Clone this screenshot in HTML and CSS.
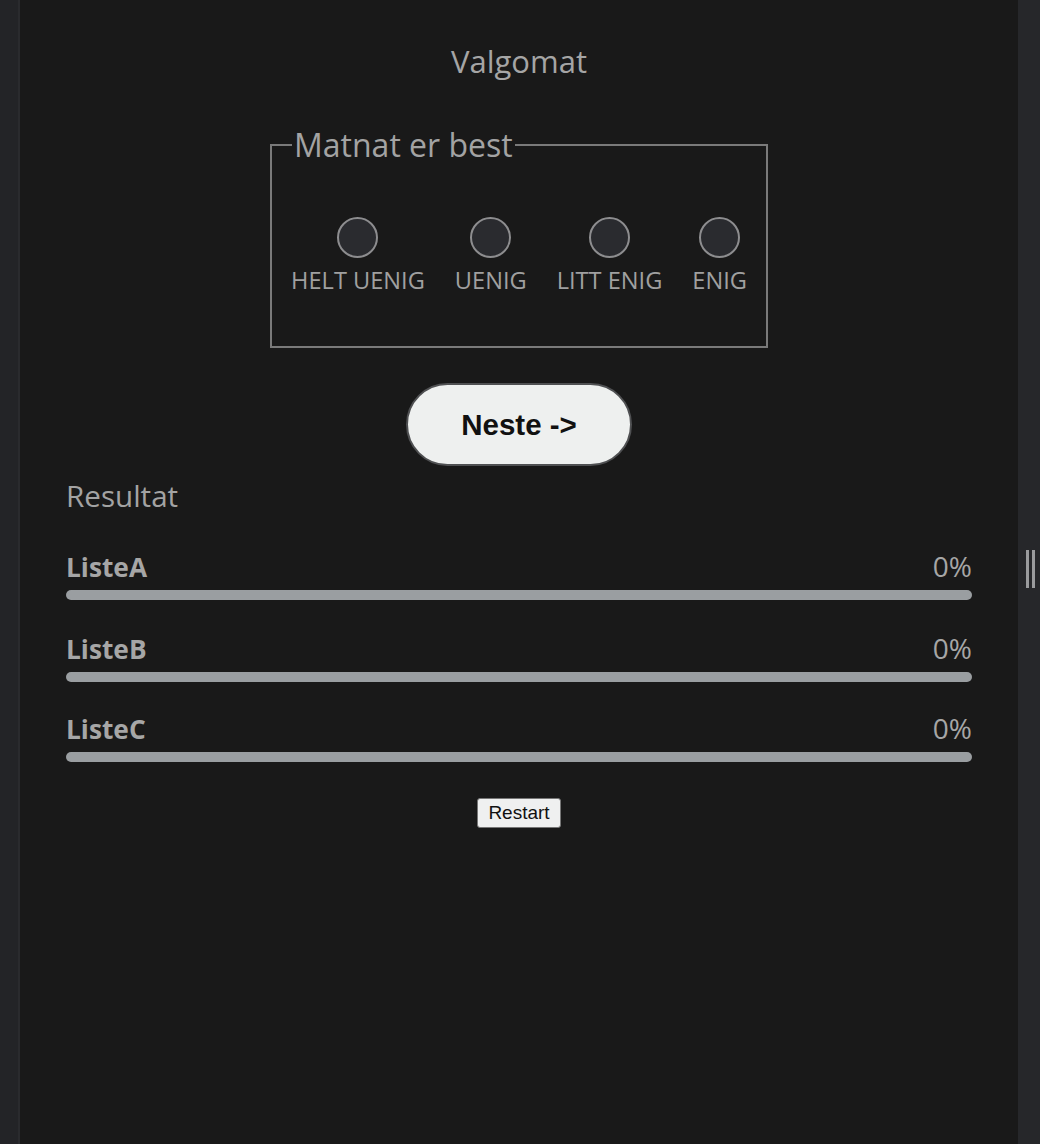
FILE: index.html
```html
<!DOCTYPE html>
<html lang="no">
<head>
<meta charset="utf-8">
<title>Valgomat</title>
<link rel="stylesheet" href="styles.css">
</head>
<body>
<div class="shell">
  <div class="side-left"></div>
  <main class="panel">
    <h1 class="title">Valgomat</h1>
    <form class="quiz">
      <fieldset class="question">
        <legend>Matnat er best</legend>
        <div class="options">
          <label class="option"><input type="radio" name="q"><span>HELT UENIG</span></label>
          <label class="option"><input type="radio" name="q"><span>UENIG</span></label>
          <label class="option"><input type="radio" name="q"><span>LITT ENIG</span></label>
          <label class="option"><input type="radio" name="q"><span>ENIG</span></label>
        </div>
      </fieldset>
      <button type="button" class="next">Neste -&gt;</button>
    </form>
    <section class="results">
      <h2 class="results-title">Resultat</h2>
      <div class="row">
        <div class="row-head"><span class="name">ListeA</span><span class="pct">0%</span></div>
        <div class="bar"></div>
      </div>
      <div class="row">
        <div class="row-head"><span class="name">ListeB</span><span class="pct">0%</span></div>
        <div class="bar"></div>
      </div>
      <div class="row row-last">
        <div class="row-head"><span class="name">ListeC</span><span class="pct">0%</span></div>
        <div class="bar"></div>
      </div>
      <div class="restart-wrap"><button type="button" class="restart">Restart</button></div>
    </section>
  </main>
  <div class="side-right"><div class="handle"><i></i><i></i></div></div>
</div>
</body>
</html>
```

FILE: styles.css
```css
html, body {
  margin: 0;
  padding: 0;
  height: 100%;
  background: #191919;
}
body {
  font-family: "Open Sans", "Noto Sans", sans-serif;
  color: #a3a3a3;
}
.shell {
  display: flex;
  height: 1144px;
  overflow: hidden;
}
.side-left {
  width: 18px;
  background: #232427;
  border-right: 2px solid #2a2b2e;
}
.panel {
  flex: 1;
  background: #191919;
  padding: 0 46px;
  display: flex;
  flex-direction: column;
}
.side-right {
  width: 22px;
  background: #26272a;
  display: flex;
  align-items: flex-start;
  justify-content: center;
}
.handle {
  margin-top: 550px;
  display: flex;
  gap: 3px;
  margin-left: 2px;
}
.handle i {
  display: block;
  width: 3px;
  height: 38px;
  background: #9a9b9d;
}
.title {
  margin: 40px 0 0;
  text-align: center;
  font-weight: 400;
  font-size: 31px;
  line-height: 42px;
  color: #a5a5a5;
}
.quiz {
  display: flex;
  flex-direction: column;
  align-items: center;
}
.question {
  margin: 45px 0 0;
  width: 498px;
  box-sizing: border-box;
  border: 2px solid #7a7a7a;
  padding: 54px 10px 50px;
}
.question legend {
  font-size: 32px;
  line-height: 36px;
  padding: 0 2px;
  margin-left: 10px;
  color: #a3a3a3;
}
.options {
  display: flex;
  justify-content: center;
  gap: 30px;
}
.option {
  display: flex;
  flex-direction: column;
  align-items: center;
  gap: 6px;
  font-size: 23.6px;
  line-height: 32px;
  color: #a0a0a0;
}
.option input {
  appearance: none;
  -webkit-appearance: none;
  margin: 0;
  width: 41px;
  height: 41px;
  border-radius: 50%;
  border: 2px solid #8d8d8f;
  background: #2a2b2f;
  box-sizing: border-box;
}
.next {
  margin-top: 35px;
  width: 226px;
  height: 83px;
  border-radius: 42px;
  border: 2px solid #4f5052;
  background: #eef0ef;
  color: #111;
  font-family: "Liberation Sans", Arial, sans-serif;
  font-weight: 700;
  font-size: 29.5px;
}
.results {
  display: flex;
  flex-direction: column;
}
.results-title {
  margin: 9px 0 0;
  font-weight: 400;
  font-size: 29.6px;
  line-height: 42px;
  color: #a3a3a3;
}
.row {
  margin-top: 32px;
}
.row + .row {
  margin-top: 31px;
}
.row.row-last {
  margin-top: 29px;
}
.row-head {
  display: flex;
  justify-content: space-between;
  align-items: baseline;
  line-height: 34px;
}
.name {
  font-weight: 700;
  font-size: 26.3px;
  color: #a6a6a6;
}
.pct {
  font-size: 28px;
  color: #a6a6a6;
}
.bar {
  margin-top: 6px;
  height: 10px;
  border-radius: 5px;
  background: #9a9ea1;
}
.restart-wrap {
  display: flex;
  justify-content: center;
  margin-top: 36px;
}
.restart {
  font-family: "Liberation Sans", Arial, sans-serif;
  font-size: 19px;
  color: #111;
  background: #eff0f0;
  border: 1px solid #767676;
  border-radius: 3px;
  padding: 3px 10px;
}
```
